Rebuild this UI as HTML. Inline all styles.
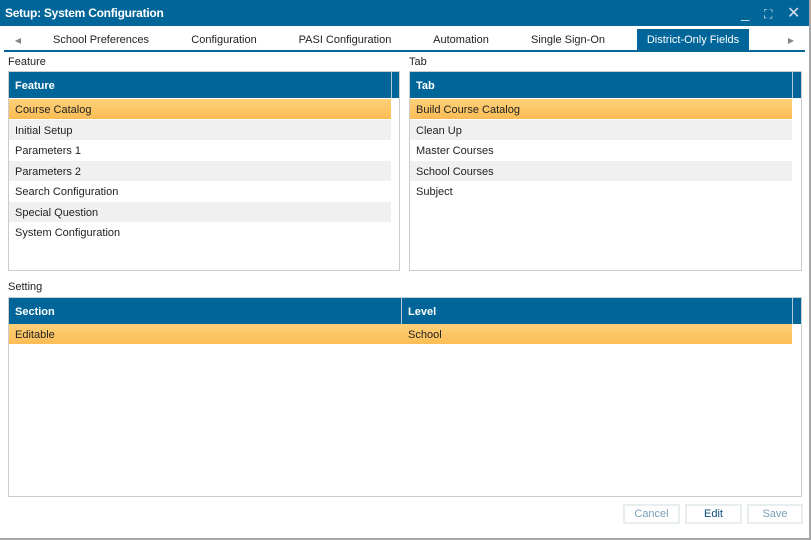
<!DOCTYPE html>
<html><head><style>
*{box-sizing:border-box;margin:0;padding:0}
body{width:811px;height:540px;background:#fff;font-family:"Liberation Sans",sans-serif;font-size:11px;color:#222;position:relative;overflow:hidden}
.win{position:absolute;left:0;top:0;width:811px;height:540px;border-right:2px solid #a8a8a8;border-bottom:2px solid #a8a8a8}
.title{position:absolute;left:0;top:0;width:809px;height:26px;background:#006699;color:#fff;font-weight:bold;font-size:12px;letter-spacing:-0.25px;line-height:27px;padding-left:5px}
.ctl{position:absolute;top:0;color:#dde;font-weight:normal;font-size:15px}
.tabs{position:absolute;top:29px;left:0;width:809px;height:22px}
.tab{position:absolute;top:0;height:21px;line-height:23px;font-size:11px;color:#222;text-align:center}
.tab.on{background:#006699;color:#fff}
.uline{position:absolute;left:4px;top:50px;width:801px;height:2px;background:#006699}
.lbl{position:absolute;font-size:11px}
.box{position:absolute;border:1px solid #ccc}
.hdr{position:absolute;background:#006699;color:#fff;font-weight:bold;height:26px;line-height:29px;padding-left:6px}
.sep{border-left:1px solid #b8c8d4}
.row{position:absolute;height:20px;line-height:22px;padding-left:6px}
.sel{background:linear-gradient(#fdd079,#fcbd55)}
.alt{background:#f0f0f0}
.btn{position:absolute;top:504px;height:20px;border:2px solid #e8eef0;text-align:center;line-height:17px;font-size:11px}
</style></head><body>
<div class="win"></div>
<div class="title">Setup: System Configuration
<span class="ctl" style="left:741px;">_</span>
<span class="ctl" style="left:764px;font-size:12px;top:1px">⛶</span>
<span class="ctl" style="left:787px;font-size:16px">✕</span></div>
<div class="tabs">
<div class="tab" style="left:12px;width:12px;color:#888;font-size:8px">◀</div>
<div class="tab" style="left:40px;width:122px">School Preferences</div>
<div class="tab" style="left:180px;width:88px">Configuration</div>
<div class="tab" style="left:290px;width:110px">PASI Configuration</div>
<div class="tab" style="left:422px;width:78px">Automation</div>
<div class="tab" style="left:520px;width:96px">Single Sign-On</div>
<div class="tab on" style="left:637px;width:112px">District-Only Fields</div>
<div class="tab" style="left:785px;width:12px;color:#888;font-size:8px">▶</div>
</div>
<div class="uline"></div>

<div class="lbl" style="left:8px;top:56px">Feature</div>
<div class="box" style="left:8px;top:71px;width:392px;height:200px"></div>
<div class="hdr" style="left:9px;top:72px;width:382px">Feature</div>
<div class="hdr sep" style="left:391px;top:72px;width:8px;padding:0"></div>
<div class="row sel" style="left:9px;top:99px;width:382px">Course Catalog</div>
<div class="row alt" style="left:9px;top:120px;width:382px">Initial Setup</div>
<div class="row" style="left:9px;top:140px;width:382px">Parameters 1</div>
<div class="row alt" style="left:9px;top:161px;width:382px">Parameters 2</div>
<div class="row" style="left:9px;top:181px;width:382px">Search Configuration</div>
<div class="row alt" style="left:9px;top:202px;width:382px">Special Question</div>
<div class="row" style="left:9px;top:222px;width:382px">System Configuration</div>

<div class="lbl" style="left:409px;top:56px">Tab</div>
<div class="box" style="left:409px;top:71px;width:393px;height:200px"></div>
<div class="hdr" style="left:410px;top:72px;width:382px">Tab</div>
<div class="hdr sep" style="left:792px;top:72px;width:9px;padding:0"></div>
<div class="row sel" style="left:410px;top:99px;width:382px">Build Course Catalog</div>
<div class="row alt" style="left:410px;top:120px;width:382px">Clean Up</div>
<div class="row" style="left:410px;top:140px;width:382px">Master Courses</div>
<div class="row alt" style="left:410px;top:161px;width:382px">School Courses</div>
<div class="row" style="left:410px;top:181px;width:382px">Subject</div>

<div class="lbl" style="left:8px;top:281px">Setting</div>
<div class="box" style="left:8px;top:297px;width:794px;height:200px"></div>
<div class="hdr" style="left:9px;top:298px;width:392px">Section</div>
<div class="hdr sep" style="left:401px;top:298px;width:391px">Level</div>
<div class="hdr sep" style="left:792px;top:298px;width:9px;padding:0"></div>
<div class="row sel" style="left:9px;top:324px;width:392px">Editable</div>
<div class="row sel" style="left:401px;top:324px;width:391px;padding-left:7px">School</div>

<div class="btn" style="left:623px;width:57px;color:#7aa0b8">Cancel</div>
<div class="btn" style="left:685px;width:57px;color:#0a4f7a">Edit</div>
<div class="btn" style="left:747px;width:56px;color:#7aa0b8">Save</div>
</body></html>
